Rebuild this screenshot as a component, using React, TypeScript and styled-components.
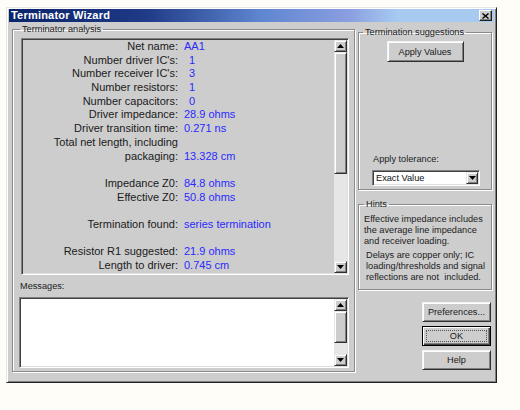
import React from 'react';
import styled, { createGlobalStyle } from 'styled-components';

const gray = '#cdcdcd';

const GlobalStyle = createGlobalStyle`
  html, body {
    margin: 0;
    padding: 0;
    background: #fffdf8;
  }

  body {
    font-family: "Liberation Sans", Arial, sans-serif;
  }
`;

const Page = styled.div`
  padding: 7px 0 0 6px;
`;

const Window = styled.div`
  box-sizing: border-box;
  width: 491px;
  height: 376px;
  background: ${gray};
  border: 1px solid;
  border-color: #e6e6e6 #202020 #202020 #e6e6e6;
  box-shadow: inset 1px 1px 0 #fff, inset -1px -1px 0 #808080;
  padding: 1px 2px 2px 2px;
  display: flex;
  flex-direction: column;
`;

const TitleBar = styled.div`
  height: 13px;
  display: flex;
  align-items: center;
  justify-content: space-between;
  padding: 0 2px 0 2px;
  background: linear-gradient(90deg, #0a246a 0%, #1f3a86 28%, #5f86d0 52%, #8a9ee0 70%, #a6caf0 80%, #a6caf0 100%);
`;

const Title = styled.span`
  color: #fff;
  font-size: 11px;
  font-weight: bold;
  letter-spacing: 0.2px;
  line-height: 13px;
`;

const CloseButton = styled.span`
  box-sizing: border-box;
  width: 13px;
  height: 11px;
  display: flex;
  align-items: center;
  justify-content: center;
  background: ${gray};
  border: 1px solid;
  border-color: #fff #202020 #202020 #fff;
  box-shadow: inset -1px -1px 0 #808080;
`;

const Body = styled.div`
  display: flex;
  gap: 3px;
  padding: 2px 2px 0 3px;
`;

const LeftColumn = styled.div`
  width: 343px;
  display: flex;
  flex-direction: column;
`;

const RightColumn = styled.div`
  width: 134px;
  display: flex;
  flex-direction: column;
  padding-top: 3px;
`;

const Group = styled.fieldset`
  margin: 0;
  min-width: 0;
  border: 1px solid #8a8a8a;
  box-shadow: inset 1px 1px 0 #fff, 1px 1px 0 #fff;
  display: flex;
  flex-direction: column;
`;

const AnalysisGroup = styled(Group)`
  padding: 3px 5px 3px 7px;
`;

const SuggestionGroup = styled(Group)`
  padding: 3px 4px 3px 4px;
`;

const HintsGroup = styled(Group)`
  margin-top: 9px;
  padding: 4px 4px 6px 5px;
`;

const GroupLabel = styled.legend`
  font-size: 9.2px;
  line-height: 11px;
  color: #1c1c1c;
  padding: 0 2px;
`;

const Sunken = styled.div`
  box-sizing: border-box;
  display: flex;
  border: 1px solid;
  border-color: #808080 #fff #fff #808080;
  box-shadow: inset 1px 1px 0 #404040, inset -1px -1px 0 #dfdfdf;
  padding: 1px;
`;

const AnalysisPanel = styled(Sunken)`
  width: 328px;
  height: 237px;
  margin-left: 1px;
`;

const MessagesBox = styled(Sunken)`
  width: 330px;
  height: 71px;
  margin-left: -1px;
  background: #fff;
`;

const DataGrid = styled.div`
  flex: 1;
  display: grid;
  grid-template-columns: 155px 1fr;
  grid-auto-rows: 13.7px;
  column-gap: 6px;
  align-content: start;
  font-size: 11px;
  line-height: 13.7px;
  white-space: nowrap;
`;

const Label = styled.span`
  text-align: right;
  color: #1a1a1a;
`;

const Value = styled.span<{ $indent?: boolean }>`
  color: #2a2aff;
  padding-left: ${({ $indent }) => ($indent ? '5px' : '0')};
`;

const BlankRow = styled.div`
  grid-column: 1 / -1;
`;

const SmallText = styled.div`
  font-size: 9.2px;
  line-height: 11px;
  color: #1c1c1c;
`;

const MessagesLabel = styled(SmallText)`
  margin-top: 6px;
  margin-bottom: 5px;
`;

const MessagesArea = styled.div`
  flex: 1;
`;

const ScrollBar = styled.div<{ $thumb: number }>`
  width: 13px;
  display: flex;
  flex-direction: column;
  background: #e6e6e6;

  & > div:nth-child(2) {
    height: ${({ $thumb }) => $thumb}px;
  }
`;

const Raised = styled.div`
  box-sizing: border-box;
  background: ${gray};
  border: 1px solid;
  border-color: #e8e8e8 #303030 #303030 #e8e8e8;
  box-shadow: inset 1px 1px 0 #fff, inset -1px -1px 0 #808080;
`;

const ArrowButton = styled(Raised)`
  height: 12px;
  display: flex;
  align-items: center;
  justify-content: center;
`;

const Thumb = styled(Raised)``;

const Track = styled.div`
  flex: 1;
`;

const DialogButton = styled.button<{ $isDefault?: boolean }>`
  position: relative;
  box-sizing: border-box;
  width: 69px;
  height: 20px;
  padding: 0;
  font-family: inherit;
  font-size: 9.2px;
  color: #1a1a1a;
  background: ${gray};
  border: 1px solid;
  border-color: ${({ $isDefault }) => ($isDefault ? '#000' : '#f4f4f4 #303030 #303030 #f4f4f4')};
  box-shadow: ${({ $isDefault }) => ($isDefault
    ? 'inset 1px 1px 0 #fff, inset -1px -1px 0 #404040, inset -2px -2px 0 #808080'
    : 'inset 1px 1px 0 #fff, inset -1px -1px 0 #808080')};
  align-self: flex-end;
`;

const ApplyButton = styled(DialogButton)`
  width: 77px;
  height: 21px;
  align-self: center;
`;

const FocusRing = styled.span`
  position: absolute;
  inset: 3px;
  border: 1px dotted #555;
  pointer-events: none;
`;

const ButtonStack = styled.div`
  display: flex;
  flex-direction: column;
  gap: 4px;
  margin-top: 12px;
  padding-right: 1px;
`;

const ToleranceLabel = styled(SmallText)`
  margin: 92px 0 0 10px;
`;

const Select = styled.div`
  box-sizing: border-box;
  width: 108px;
  height: 16px;
  margin: 5px 0 0 9px;
  display: flex;
  align-items: stretch;
  background: #fff;
  border: 1px solid;
  border-color: #808080 #fff #fff #808080;
  box-shadow: inset 1px 1px 0 #404040, inset -1px -1px 0 #dfdfdf;
  padding: 1px;
`;

const SelectText = styled.span`
  flex: 1;
  font-size: 9.2px;
  line-height: 12px;
  padding-left: 2px;
  color: #111;
`;

const SelectArrow = styled(Raised)`
  width: 12px;
  display: flex;
  align-items: center;
  justify-content: center;
`;

const HintParagraph = styled(SmallText)`
  & + & {
    margin-top: 3px;
    padding-left: 2px;
  }
`;

function Arrow({ dir }: { dir: 'up' | 'down' }) {
  return (
    <svg width='7' height='4' viewBox='0 0 7 4'>
      <path d={dir === 'up' ? 'M3.5 0 L7 4 L0 4 Z' : 'M0 0 L7 0 L3.5 4 Z'} fill='#000' />
    </svg>
  );
}

function VScroll({ thumb }: { thumb: number }) {
  return (
    <ScrollBar $thumb={thumb}>
      <ArrowButton><Arrow dir='up' /></ArrowButton>
      <Thumb />
      <Track />
      <ArrowButton><Arrow dir='down' /></ArrowButton>
    </ScrollBar>
  );
}

type Row = { label: string; value?: string; indent?: boolean } | null;

const rows: Row[] = [
  { label: 'Net name:', value: 'AA1' },
  { label: "Number driver IC's:", value: '1', indent: true },
  { label: "Number receiver IC's:", value: '3', indent: true },
  { label: 'Number resistors:', value: '1', indent: true },
  { label: 'Number capacitors:', value: '0', indent: true },
  { label: 'Driver impedance:', value: '28.9 ohms' },
  { label: 'Driver transition time:', value: '0.271 ns' },
  { label: 'Total net length, including' },
  { label: 'packaging:', value: '13.328 cm' },
  null,
  { label: 'Impedance Z0:', value: '84.8 ohms' },
  { label: 'Effective Z0:', value: '50.8 ohms' },
  null,
  { label: 'Termination found:', value: 'series termination' },
  null,
  { label: 'Resistor R1 suggested:', value: '21.9 ohms' },
  { label: 'Length to driver:', value: '0.745 cm' },
];

export default function App() {
  return (
    <>
      <GlobalStyle />
      <Page>
        <Window>
          <TitleBar>
            <Title>Terminator Wizard</Title>
            <CloseButton>
              <svg width='7' height='6' viewBox='0 0 7 6'>
                <path d='M0.5 0.5 L6.5 5.5 M6.5 0.5 L0.5 5.5' stroke='#000' strokeWidth='1.4' />
              </svg>
            </CloseButton>
          </TitleBar>
          <Body>
            <LeftColumn>
              <AnalysisGroup>
                <GroupLabel>Terminator analysis</GroupLabel>
                <AnalysisPanel>
                  <DataGrid>
                    {rows.map((row, i) => (row ? (
                      <React.Fragment key={i}>
                        <Label>{row.label}</Label>
                        <Value $indent={row.indent}>{row.value ?? ''}</Value>
                      </React.Fragment>
                    ) : <BlankRow key={i} />))}
                  </DataGrid>
                  <VScroll thumb={122} />
                </AnalysisPanel>
                <MessagesLabel>Messages:</MessagesLabel>
                <MessagesBox>
                  <MessagesArea />
                  <VScroll thumb={32} />
                </MessagesBox>
              </AnalysisGroup>
            </LeftColumn>
            <RightColumn>
              <SuggestionGroup>
                <GroupLabel>Termination suggestions</GroupLabel>
                <ApplyButton type='button'>Apply Values</ApplyButton>
                <ToleranceLabel>Apply tolerance:</ToleranceLabel>
                <Select>
                  <SelectText>Exact Value</SelectText>
                  <SelectArrow><Arrow dir='down' /></SelectArrow>
                </Select>
              </SuggestionGroup>
              <HintsGroup>
                <GroupLabel>Hints</GroupLabel>
                <HintParagraph>
                  Effective impedance includes<br />
                  the average line impedance<br />
                  and receiver loading.
                </HintParagraph>
                <HintParagraph>
                  Delays are copper only; IC<br />
                  loading/thresholds and signal<br />
                  reflections are not&nbsp; included.
                </HintParagraph>
              </HintsGroup>
              <ButtonStack>
                <DialogButton type='button'>Preferences...</DialogButton>
                <DialogButton type='button' $isDefault>
                  OK
                  <FocusRing />
                </DialogButton>
                <DialogButton type='button'>Help</DialogButton>
              </ButtonStack>
            </RightColumn>
          </Body>
        </Window>
      </Page>
    </>
  );
}
